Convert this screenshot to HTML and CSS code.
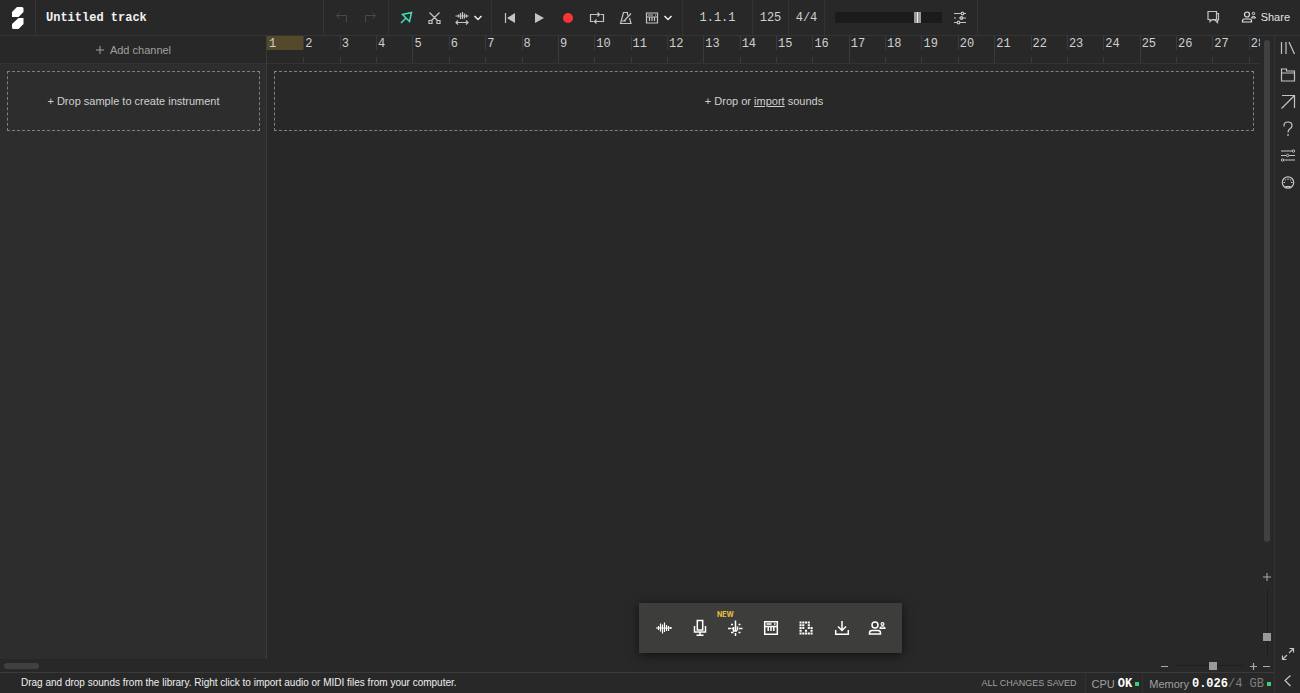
FILE: index.html
```html
<!DOCTYPE html>
<html lang="en">
<head>
<meta charset="utf-8">
<title>Untitled track</title>
<link rel="stylesheet" href="styles.css">
</head>
<body>
<div class="app">
  <header class="topbar">
    <a class="logo" href="#" aria-label="Home"><svg width="12" height="22" viewBox="0 0 12 22"><path class="solid" d="M5 0h5q1.500 0 1.500 1.500V5L6.500 10H0V5zM6.500 11h5v6L6.500 22h-5Q0 22 0 20.500V17z"/></svg></a>
    <h1 class="title">Untitled track</h1>
    <div class="group history">
      <button class="icon-btn" aria-label="Undo"><svg width="16" height="16" viewBox="0 0 16 16"><path d="M5.500 2.500L2.500 5.500l3 3M2.500 5.500h10v7"/></svg></button>
      <button class="icon-btn" aria-label="Redo"><svg width="16" height="16" viewBox="0 0 16 16"><path d="M10.500 2.500l3 3-3 3M13.500 5.500h-10v7"/></svg></button>
    </div>
    <div class="group tools">
      <button class="icon-btn active" aria-label="Select"><svg width="16" height="16" viewBox="0 0 16 16"><path class="mid" d="M13.500 2.500L4.500 4.500l7 7zM8 8l-5 5"/></svg></button>
      <button class="icon-btn" aria-label="Cut"><svg width="16" height="16" viewBox="0 0 16 16"><path class="firm" d="M3.500 2.500l8 8M13.500 2.500l-8 8M3 10.500h3v3H3zM11 10.500h3v3h-3z"/></svg></button>
      <div class="pair">
        <button class="icon-btn" aria-label="Stretch"><svg width="16" height="16" viewBox="0 0 16 16"><path class="firm" d="M4.500 4.500v3M6.500 3v6M8.500 2v7M10.500 3.500v5M12.500 4.500v3M1.500 6h13M2 12.500h12M4 10.500l-2 2 2 2M12 10.500l2 2-2 2"/></svg></button>
        <button class="icon-btn bright" aria-label="Stretch options"><svg width="16" height="16" viewBox="0 0 16 16"><path class="mid" d="M4.500 6L8 9.500 11.500 6"/></svg></button>
      </div>
    </div>
    <div class="group transport">
      <div class="playback">
        <button class="icon-btn" aria-label="Back to start"><svg width="16" height="16" viewBox="0 0 16 16"><path class="firm" d="M3.500 3v10"/><path class="solid" d="M13 3v10L5 8z"/></svg></button>
        <button class="icon-btn" aria-label="Play"><svg width="16" height="16" viewBox="0 0 16 16"><path class="solid" d="M4 3v10l9-5z"/></svg></button>
        <button class="icon-btn record" aria-label="Record"><svg width="16" height="16" viewBox="0 0 16 16"><circle class="solid" cx="8" cy="8" r="5"/></svg></button>
        <button class="icon-btn" aria-label="Loop"><svg width="16" height="16" viewBox="0 0 16 16"><path class="firm" d="M4.500 11.500H1.500v-7h9M8.500 2.500l2 2-2 2M11.500 4.500h3v7h-9M7.500 9.500l-2 2 2 2"/></svg></button>
        <button class="icon-btn" aria-label="Metronome"><svg width="16" height="16" viewBox="0 0 16 16"><path class="firm" d="M9.500 5.500v-3h-4l-3 11h10.500l-1.500-5.500M6 11L13 3.500M4 11h4"/></svg></button>
      </div>
      <div class="pair">
        <button class="icon-btn" aria-label="Keyboard"><svg width="16" height="16" viewBox="0 0 16 16"><path class="firm" d="M2.500 3h11v10h-11zM2.500 7h11M5.500 7v4M8 7v4M10.500 7v4M4 5h5M11 5h1"/></svg></button>
        <button class="icon-btn bright" aria-label="Keyboard options"><svg width="16" height="16" viewBox="0 0 16 16"><path class="mid" d="M4.500 6L8 9.500 11.500 6"/></svg></button>
      </div>
    </div>
    <button class="group readout position">1.1.1</button>
    <button class="group readout tempo">125</button>
    <button class="group readout meter">4/4</button>
    <div class="group master">
      <input class="volume" type="range" min="0" max="100" value="79" aria-label="Master volume">
      <button class="icon-btn" aria-label="Mixer"><svg width="16" height="16" viewBox="0 0 16 16"><path class="firm" d="M2 3.500h7M12 3.500h2M2 8h2M7 8h7M2 12.500h3M8 12.500h6"/><circle class="firm" cx="10.500" cy="3.500" r="1.300"/><circle class="firm" cx="9.500" cy="8" r="1.300"/><circle class="firm" cx="6.500" cy="12.500" r="1.300"/></svg></button>
    </div>
    <div class="social">
      <button class="icon-btn" aria-label="Comments"><svg width="16" height="16" viewBox="0 0 16 16"><path class="firm" d="M3 2.500h8.500v8H7l-2 2v-2H3zM11.500 4.500h2v6.500h-1v2.500l-2.500-2.500H7.500"/></svg></button>
      <button class="share"><svg width="16" height="16" viewBox="0 0 16 16"><circle class="firm" cx="6" cy="5.500" r="2.500"/><circle cx="12.500" cy="4.500" r="1.200"/><path class="firm" d="M1.500 13v-1q0-2 2-2h5q2 0 2 2v1z"/><path d="M10.500 9q0-1.500 2-1.500t2 1.500z"/></svg>Share</button>
    </div>
  </header>

  <main class="editor">
    <section class="channels">
      <button class="add-channel"><svg width="10" height="10" viewBox="0 0 10 10"><path d="M5 1v8M1 5h8"/></svg>Add channel</button>
      <div class="lane"><div class="drop"><span>+ Drop sample to create instrument</span></div></div>
    </section>
    <section class="timeline">
      <ol class="ruler">
        <li class="bar first">1</li><li class="bar">2</li><li class="bar">3</li><li class="bar">4</li>
        <li class="bar">5</li><li class="bar">6</li><li class="bar">7</li><li class="bar">8</li>
        <li class="bar">9</li><li class="bar">10</li><li class="bar">11</li><li class="bar">12</li>
        <li class="bar">13</li><li class="bar">14</li><li class="bar">15</li><li class="bar">16</li>
        <li class="bar">17</li><li class="bar">18</li><li class="bar">19</li><li class="bar">20</li>
        <li class="bar">21</li><li class="bar">22</li><li class="bar">23</li><li class="bar">24</li>
        <li class="bar">25</li><li class="bar">26</li><li class="bar">27</li><li class="bar">28</li>
      </ol>
      <div class="lane"><div class="drop"><span>+ Drop or <a href="#">import</a> sounds</span></div></div>
    </section>
    <div class="vertical">
      <div class="vscroll"></div>
      <button class="zoom-btn" aria-label="Taller tracks"><svg width="10" height="10" viewBox="0 0 10 10"><path d="M5 1v8M1 5h8"/></svg></button>
      <input class="zoom zoom-y" type="range" min="0" max="100" value="26" aria-label="Track height">
    </div>
    <nav class="create" aria-label="Add sounds">
      <button class="create-btn" aria-label="Audio"><svg width="20" height="20" viewBox="0 0 20 20"><path class="firm" d="M2 10h16M4.500 8v4M6.500 5.500v8M8.500 6.500v9M10.500 4.500v9.500M12.500 7v6M14.500 8v5M16.500 9v2"/></svg></button>
      <button class="create-btn" aria-label="Record voice"><svg width="20" height="20" viewBox="0 0 20 20"><path class="mid" d="M7.300 2.500h5.400v9.500H7.300zM4.500 8v6h11V8M10 14v3.500M6.500 17.300h7"/></svg></button>
      <button class="create-btn" aria-label="Generate"><span class="badge">NEW</span><svg width="20" height="20" viewBox="0 0 20 20"><path class="mid" d="M3 10.500h3.500M14 10.500h3.500M10.500 2.500V13M10.500 15v3M8.500 9v4.500M8 13h4M12.500 8.500v4M6 6.500h2M6 14.500h2.500M13.500 14.500h2M13.500 6.500h2M7 10.500h1"/></svg></button>
      <button class="create-btn" aria-label="Instrument"><svg width="20" height="20" viewBox="0 0 20 20"><path class="mid" d="M3.700 3.700h12.600v12.600H3.700zM3.700 8.500h12.600M7.200 8.500V13M10 8.500V13M12.800 8.500V13M5.500 6h5M13 6h1.500"/></svg></button>
      <button class="create-btn" aria-label="Beat maker"><svg width="20" height="20" viewBox="0 0 20 20"><path class="dots" d="M3.500 4.500h10.400M3.500 7.250h5M11.750 7.250h2.100M3.500 10h5M11.750 10h4.900M3.500 12.750h2.100M9 12.750h2.100M14.500 12.750h2.100M3.500 15.500h13.100"/></svg></button>
      <button class="create-btn" aria-label="Import file"><svg width="20" height="20" viewBox="0 0 20 20"><path class="mid" d="M10 3v9.500M6 8.500l4 4 4-4M3.700 12v4.300h12.600V12"/></svg></button>
      <button class="create-btn" aria-label="Collaborate"><svg width="20" height="20" viewBox="0 0 20 20"><circle class="mid" cx="8" cy="7" r="3"/><circle class="firm" cx="15.500" cy="6" r="1.400"/><path class="mid" d="M2.500 16v-1q0-2.500 2.500-2.500h6q2.500 0 2.500 2.500v1z"/><path class="firm" d="M13 10.500q0-1.700 2.500-1.700T18 10.500z"/></svg></button>
    </nav>
  </main>

  <div class="scrollrow">
    <div class="hscroll"></div>
    <div class="zoom-group">
      <button class="zoom-btn" aria-label="Zoom out"><svg width="10" height="10" viewBox="0 0 10 10"><path d="M1 5.500h7"/></svg></button>
      <input class="zoom zoom-x" type="range" min="0" max="100" value="56" aria-label="Zoom">
      <button class="zoom-btn" aria-label="Zoom in"><svg width="10" height="10" viewBox="0 0 10 10"><path class="firm" d="M5.500 2v7M2 5.500h7"/></svg></button>
    </div>
    <button class="zoom-btn" aria-label="Shorter tracks"><svg width="10" height="10" viewBox="0 0 10 10"><path d="M2 5.500h7"/></svg></button>
  </div>

  <footer class="status">
    <p class="hint">Drag and drop sounds from the library. Right click to import audio or MIDI files from your computer.</p>
    <p class="saved">ALL CHANGES SAVED</p>
    <p class="stat cpu">CPU <b>OK</b><i class="led"></i></p>
    <p class="stat">Memory <span class="figures"><b>0.026</b>/4 GB</span><i class="led"></i></p>
  </footer>

  <aside class="rail">
    <button class="icon-btn" aria-label="Library"><svg width="16" height="16" viewBox="0 0 16 16"><path class="firm" d="M1.500 2v12M6 2v12M9 2l5.500 12"/></svg></button>
    <button class="icon-btn" aria-label="Files"><svg width="16" height="16" viewBox="0 0 16 16"><path class="firm" d="M1.500 14v-12h5v2h8v10zM1.500 6h13"/></svg></button>
    <button class="icon-btn" aria-label="Open"><svg width="16" height="16" viewBox="0 0 16 16"><path class="firm" d="M2 1.500h12.500V14M14.500 1.500l-13 13"/></svg></button>
    <button class="icon-btn" aria-label="Help"><svg width="16" height="16" viewBox="0 0 16 16"><path class="firm" d="M4 5.500v-1q0-3.500 4-3.500t4 3.500q0 2-2 3.200Q8 9 8 11.500M8 13v2"/></svg></button>
    <button class="icon-btn" aria-label="Settings"><svg width="16" height="16" viewBox="0 0 16 16"><path d="M1 3h11M1 7.500h5M9 7.500h6M4 12h11"/><circle cx="13.500" cy="3" r="1.200"/><circle cx="7.500" cy="7.500" r="1.200"/><circle cx="2.500" cy="12" r="1.200"/></svg></button>
    <button class="icon-btn" aria-label="MIDI"><svg width="16" height="16" viewBox="0 0 16 16"><circle class="firm" cx="8" cy="7.500" r="5.700"/><path class="firm" d="M8 3.500V5M5 4.500l.7.900M11 4.500l-.7.900M3.500 7.500H5M11 7.500h1.500M6 13v-1.500h4V13"/></svg></button>
    <button class="icon-btn push" aria-label="Full screen"><svg width="16" height="16" viewBox="0 0 16 16"><path class="firm" d="M9 7l4.500-4.500M9.500 2.500h4v4M7 9l-4.500 4.500M2.500 9.500v4h4"/></svg></button>
    <button class="icon-btn" aria-label="Collapse panel"><svg width="16" height="16" viewBox="0 0 16 16"><path class="firm" d="M10.500 2.500L5 7.500l5.500 5.500"/></svg></button>
  </aside>
</div>
</body>
</html>
```
FILE: styles.css
```css
* { box-sizing: border-box; }

body {
  margin: 0;
  background: #282828;
  color: #d0d0d0;
  font: 11px/16px "Liberation Sans", Arial, sans-serif;
}

button, input { font: inherit; color: inherit; margin: 0; }
button { border: 0; padding: 0; background: none; }
p { margin: 0; }
a { color: inherit; }
svg {
  display: block;
  flex: none;
  fill: none;
  stroke: currentColor;
  stroke-width: 1;
}
.solid { fill: currentColor; stroke: none; }
.firm { stroke-width: 1.2; }
.mid { stroke-width: 1.5; }
.dots { stroke-width: 2.1; stroke-dasharray: 2.1 .65; }

.app {
  display: grid;
  grid-template-columns: minmax(0, 1fr) 26px;
  grid-template-rows: 36px minmax(0, 1fr) 13px 21px;
  height: 100vh;
  overflow: hidden;
}

/* Top bar */
.topbar {
  grid-column: 1 / -1;
  display: flex;
  align-items: stretch;
  border-bottom: 1px solid #353535;
}
.logo {
  width: 36px;
  flex: none;
  display: flex;
  align-items: center;
  justify-content: center;
  color: #fff;
  border-right: 1px solid #353535;
}
.title {
  width: 288px;
  margin: 0;
  padding: 1px 0 0 10px;
  font: bold 12px/35px "Liberation Mono", monospace;
  color: #f2f2f2;
  border-right: 1px solid #353535;
}
.group {
  flex: none;
  display: flex;
  align-items: center;
  border-right: 1px solid #333;
}
.icon-btn {
  width: 16px;
  height: 16px;
  flex: none;
  color: #c4c4c4;
}
.icon-btn.active { color: #3fe0b5; }
.icon-btn.bright { color: #eee; }
.icon-btn.record { color: #f93434; }
.pair { display: flex; }
.history { width: 65px; padding-left: 10px; gap: 12px; }
.history .icon-btn { color: #484848; }
.tools { width: 103px; padding-left: 9px; gap: 12px; }
.transport { width: 191px; padding-left: 10px; gap: 10px; }
.playback { display: flex; gap: 13px; }
.readout {
  justify-content: center;
  padding-top: 2px;
  font: 12px/33px "Liberation Mono", monospace;
  color: #d0d0d0;
}
.position { width: 70px; }
.tempo { width: 36px; }
.meter { width: 36px; }
.master { width: 153px; padding-left: 10px; gap: 10px; border-right-color: #353535; }
.volume {
  appearance: none;
  width: 107px;
  height: 11px;
  background: #1b1b1b;
}
.volume::-webkit-slider-thumb {
  appearance: none;
  width: 7px;
  height: 11px;
  background: linear-gradient(90deg, #999 3px, #eee 3px 4px, #999 4px);
}
.social {
  margin-left: auto;
  padding: 0 10px 2px 0;
  display: flex;
  align-items: center;
  gap: 20px;
}
.share { display: flex; align-items: center; gap: 4px; color: #e2e2e2; }

/* Editor */
.editor {
  position: relative;
  display: grid;
  grid-template-columns: 267px minmax(0, 1fr) 14px;
}
.channels {
  background: #2d2d2d;
  border-right: 1px solid #3a3a3a;
}
.add-channel {
  width: 100%;
  height: 28px;
  display: flex;
  align-items: center;
  justify-content: center;
  gap: 5px;
  background: #282828;
  color: #a0a0a0;
  border-bottom: 1px solid #333;
}
.lane { padding: 7px 6px 7px 7px; }
.drop {
  height: 60px;
  display: flex;
  align-items: center;
  justify-content: center;
  border: 1px dashed #808080;
}
.ruler {
  display: grid;
  grid-template-columns: repeat(28, calc(100% / 27.3));
  height: 28px;
  margin: 0;
  padding: 0;
  list-style: none;
  overflow: hidden;
  border-bottom: 1px solid #333;
}
.bar {
  padding: 1px 0 0 2px;
  font: 12px/15px "Liberation Mono", monospace;
  color: #d0d0d0;
  background: linear-gradient(#3a3a3a 14px, transparent 14px 21px, #3a3a3a 21px) 0 0 / 1px 100% no-repeat;
}
.bar:nth-child(4n + 1) { background: linear-gradient(#3a3a3a, #3a3a3a) 0 0 / 1px 100% no-repeat; }
.bar.first { background: linear-gradient(#544a2b, #544a2b) 0 0 / 100% 14px no-repeat; }

.vertical {
  display: flex;
  flex-direction: column;
  align-items: center;
}
.vscroll {
  flex: 1;
  width: 6px;
  margin: 4px 0 30px;
  border-radius: 3px;
  background: #404040;
}
.zoom-btn { width: 10px; height: 10px; flex: none; color: #aaa; }
.zoom { appearance: none; background: none; }
.zoom::-webkit-slider-thumb {
  appearance: none;
  width: 8px;
  height: 8px;
  background: #999;
}
.zoom-y {
  writing-mode: vertical-lr;
  direction: rtl;
  width: 8px;
  height: 66px;
  margin: 8px 0 3px;
  background: linear-gradient(#1e1e1e, #1e1e1e) center / 1px 100% no-repeat;
}
.zoom-x {
  width: 68px;
  height: 8px;
  background: linear-gradient(#1e1e1e, #1e1e1e) center / 100% 1px no-repeat;
}

.create {
  position: absolute;
  left: 267px;
  right: 0;
  bottom: 6px;
  width: 263px;
  height: 50px;
  margin: 0 auto;
  padding: 0 15px;
  display: flex;
  align-items: center;
  justify-content: space-between;
  background: #3d3d3b;
  box-shadow: 0 2px 10px rgba(0, 0, 0, .6);
}
.create-btn { position: relative; width: 20px; height: 20px; color: #fff; }
.badge {
  position: absolute;
  left: -8px;
  top: -7px;
  font: bold 7px/8px Inter, sans-serif;
  color: #ecc13c;
}

.scrollrow {
  grid-column: 1;
  display: flex;
  align-items: center;
  padding: 0 3px 0 4px;
}
.hscroll { width: 35px; height: 6px; border-radius: 3px; background: #404040; }
.zoom-group { margin-left: auto; margin-right: 3px; display: flex; align-items: center; gap: 5px; }

/* Status bar */
.status {
  grid-column: 1;
  display: flex;
  border-top: 1px solid #3a3a3a;
  line-height: 20px;
}
.hint { margin-right: auto; padding-left: 21px; font-size: 10px; color: #f0f0f0; }
.saved { padding-right: 8px; font-size: 9px; color: #a0a0a0; border-right: 1px solid #333; }
.stat { display: flex; align-items: center; gap: 3px; padding: 1px 3px 0 6px; color: #a0a0a0; }
.cpu { border-right: 1px solid #303030; }
.stat b, .figures { font-family: "Liberation Mono", monospace; font-size: 12px; }
.stat b { color: #fff; }
.figures { color: #808080; }
.led { width: 4px; height: 4px; background: #3ad07a; }

/* Right rail */
.rail {
  grid-column: 2;
  grid-row: 2 / 5;
  display: flex;
  flex-direction: column;
  align-items: center;
  gap: 11px;
  padding: 4px 0;
  border-left: 1px solid #333;
}
.push { margin-top: auto; }
```
